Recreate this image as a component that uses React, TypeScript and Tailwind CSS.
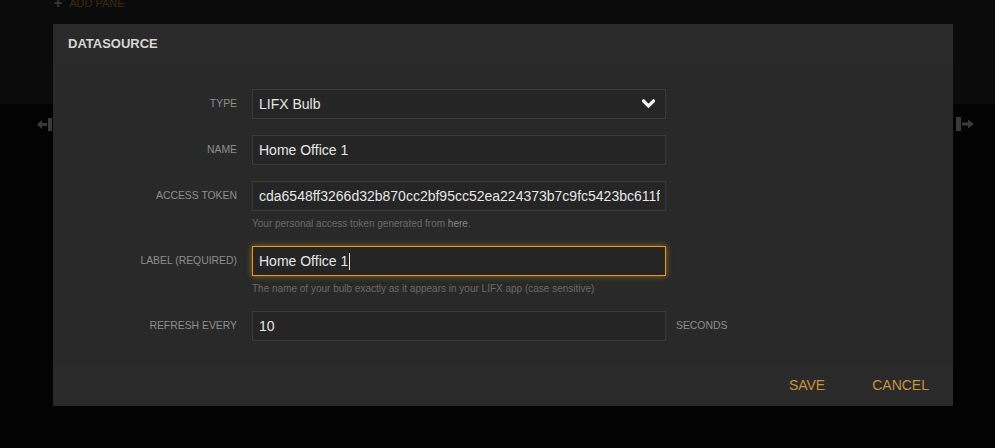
import { ReactNode } from 'react'

const font = { fontFamily: '"Liberation Sans", Arial, Helvetica, sans-serif' }

function Row({ label, children, help }: { label: string; children: ReactNode; help?: ReactNode }) {
  return (
    <div className="flex items-start">
      <div className="w-[184px] h-[30px] flex items-center justify-end text-[10.4px] uppercase text-[#8e8e8e]">
        {label}
      </div>
      <div className="ml-[15px] flex flex-col">
        {children}
        {help && <p className="mt-[7px] text-[10px] leading-[12px] text-[#6a6a6a]">{help}</p>}
      </div>
    </div>
  )
}

function Field({ value, focused, cursor }: { value: string; focused?: boolean; cursor?: boolean }) {
  return (
    <div
      className={`w-[414px] h-[30px] flex items-center px-[5px] text-[14px] text-[#e6e6e6] bg-[#252525] border ${
        focused ? 'border-[#e8981e] shadow-[0_0_6px_rgba(232,152,30,0.6)]' : 'border-[#3b3b3b]'
      }`}
    >
      <span className="flex-1 flex items-center overflow-hidden whitespace-nowrap pl-px">
        {value}
        {cursor && <span className="inline-block w-px h-[17px] bg-[#e6e6e6] ml-[1px]" />}
      </span>
    </div>
  )
}

export default function App() {
  return (
    <div className="relative w-[995px] h-[448px] overflow-hidden bg-[#030303]" style={font}>
      {/* page behind the overlay */}
      <div className="h-[104px] bg-[#0b0b0b]">
        <div className="flex items-center gap-[7px] pl-[54px] h-[14px] -translate-y-[4px]">
          <span className="text-[#3a3a3a] text-[14px] font-bold leading-none">+</span>
          <span className="text-[11px] text-[#3b2a12]">ADD PANE</span>
        </div>
      </div>
      <div className="flex justify-between items-center pl-[37px] pr-[20px] mt-[13px]">
        <svg width="15" height="13" viewBox="0 0 15 13" fill="#3a3a3a">
          <path d="M0 6.5 L5 2 L5 5 L10 5 L10 8 L5 8 L5 11 Z" />
          <rect x="11" y="0" width="4" height="13" />
        </svg>
        <svg width="19" height="14" viewBox="0 0 19 14" fill="#3a3a3a">
          <rect x="0" y="0" width="5" height="14" />
          <path d="M6 5.5 L12 5.5 L12 2.5 L18 7 L12 11.5 L12 8.5 L6 8.5 Z" />
        </svg>
      </div>

      {/* modal */}
      <div className="absolute left-[53px] top-[24px] w-[900px] bg-[#292929] flex flex-col">
        <div className="h-[40px] flex items-center px-[15px] bg-[#2a2a2a]">
          <h2 className="text-[13px] font-bold text-[#d6d6d6]">DATASOURCE</h2>
        </div>
        <div className="pt-[25px] pb-[24px] flex flex-col gap-[16px]">
          <Row label="Type">
            <div className="w-[414px] h-[30px] flex items-center justify-between pl-[6px] pr-[10px] text-[14px] text-[#e6e6e6] bg-[#252525] border border-[#3b3b3b]">
              <span>LIFX Bulb</span>
              <svg width="13" height="10" viewBox="0 0 13 10">
                <path d="M1.5 2 L6.5 7 L11.5 2" fill="none" stroke="#f2f2f2" strokeWidth="3.2" strokeLinecap="square" />
              </svg>
            </div>
          </Row>
          <Row label="Name">
            <Field value="Home Office 1" />
          </Row>
          <Row
            label="Access Token"
            help={
              <>
                Your personal access token generated from <span className="text-[#858585]">here</span>.
              </>
            }
          >
            <Field value="cda6548ff3266d32b870cc2bf95cc52ea224373b7c9fc5423bc611f8" />
          </Row>
          <Row label="Label (Required)" help="The name of your bulb exactly as it appears in your LIFX app (case sensitive)">
            <Field value="Home Office 1" focused cursor />
          </Row>
          <div className="flex items-center">
            <Row label="Refresh Every">
              <Field value="10" />
            </Row>
            <span className="ml-[10px] text-[10.4px] text-[#8e8e8e]">SECONDS</span>
          </div>
        </div>
        <div className="h-[41px] bg-[#2a2a2a] flex items-center justify-end pr-[24px] gap-[47px] text-[14px] text-[#c9923f]">
          <button>SAVE</button>
          <button>CANCEL</button>
        </div>
      </div>
    </div>
  )
}
